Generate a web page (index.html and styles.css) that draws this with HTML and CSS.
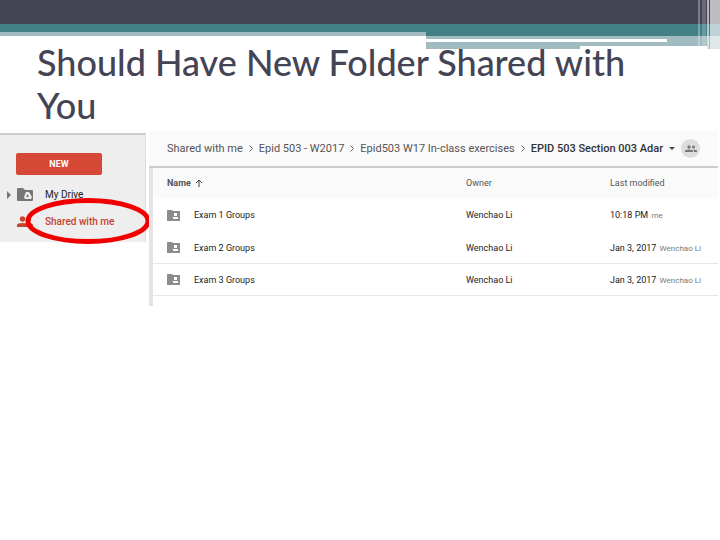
FILE: index.html
```
<!DOCTYPE html>
<html lang="en">
<head>
<meta charset="utf-8">
<title>Should Have New Folder Shared with You</title>
<link rel="stylesheet" href="styles.css">
</head>
<body>
<svg class="band" viewBox="0 0 720 49" preserveAspectRatio="none" shape-rendering="crispEdges" aria-hidden="true">
  <path fill="#444455" d="M0 0h720v24H0z"/>
  <path fill="#438086" d="M0 24h720v12H426v-4H0z"/>
  <path fill="#a0bcc0" d="M0 32h426v4H0zM426 36h281v10H580v3H426z"/>
  <path fill="#a0bcc0" d="M707 36h13v13h-13z"/>
  <path fill="#fff" d="M426 39h241v3H426z"/>
  <g fill="#fff">
    <path opacity=".3" d="M698 0h2v46h-2z"/>
    <path opacity=".2" d="M702 0h4v46h-4z"/>
    <path opacity=".6" d="M707 0h2v49h-2z"/>
    <path opacity=".65" d="M710 0h10v49h-10z"/>
  </g>
</svg>
<h1 class="title">Should Have New Folder Shared with You</h1>
<main class="shots">
  <nav class="side">
    <button class="new" type="button">NEW</button>
    <a class="link" href="#drive">
      <svg class="arrow" viewBox="0 0 4 8"><path fill="#777" d="M0 0l4 4-4 4z"/></svg>
      <svg class="icon" viewBox="0 0 16 13"><path fill="#777" d="M1 0h5l2 2h7q1 0 1 1v9q0 1-1 1H1q-1 0-1-1V1q0-1 1-1z"/><path fill="#eee" fill-rule="evenodd" d="M9 4h3l3 5-1 2H8L7 9zM10.500 6L9 9h3z"/></svg>
      <span>My Drive</span>
    </a>
    <a class="link active" href="#shared">
      <span class="arrow"></span>
      <svg class="icon" viewBox="0 0 16 13"><g fill="#c5432f"><circle cx="5.500" cy="4" r="2.700"/><circle cx="11.500" cy="4" r="2.500"/><path d="M0 12v-2q0-2 5.500-2T11 10v2zM12 12v-2q0-1-1-2 5 0 5 2v2z"/></g></svg>
      <span>Shared with me</span>
    </a>
    <svg class="ring" viewBox="0 0 126 48" aria-hidden="true"><ellipse cx="63" cy="24" rx="60" ry="20.500" fill="none" stroke="#f00000" stroke-width="5"/></svg>
  </nav>
  <section class="panel">
    <div class="crumbs">
      <a href="#shared">Shared with me</a>
      <svg class="chev" viewBox="0 0 4 7"><path d="M.5.500l3 3-3 3"/></svg>
      <a href="#w2017">Epid 503 - W2017</a>
      <svg class="chev" viewBox="0 0 4 7"><path d="M.5.500l3 3-3 3"/></svg>
      <a href="#exercises">Epid503 W17 In-class exercises</a>
      <svg class="chev" viewBox="0 0 4 7"><path d="M.5.500l3 3-3 3"/></svg>
      <button class="current" type="button">EPID 503 Section 003 Adar <svg class="caret" viewBox="0 0 6 3"><path fill="#444" d="M0 0h6L3 3z"/></svg></button>
      <button class="people" type="button" aria-label="Sharing"><svg viewBox="0 0 12 8"><g fill="#777"><circle cx="4" cy="2" r="1.700"/><circle cx="8.500" cy="2" r="1.500"/><path d="M0 7V6q0-1.500 4-1.500T8 6v1zM9 7V6l-1-1.500q4 0 4 1.500v1z"/></g></svg></button>
    </div>
    <div class="sheet">
    <table class="files">
      <thead>
        <tr><th class="name">Name <svg class="up" viewBox="0 0 8 8"><path d="M4 8V1M1 4l3-3 3 3"/></svg></th><th class="owner">Owner</th><th>Last modified</th></tr>
      </thead>
      <tbody>
        <tr><td><div class="file"><svg class="folder" viewBox="0 0 13 11"><path fill="#8c8c8c" d="M0 0h5l1 1h7v10H0z"/><path fill="#fff" d="M7 3h3v3H7zM6 7h5v2H6z"/></svg>Exam 1 Groups</div></td><td>Wenchao Li</td><td>10:18 PM <small>me</small></td></tr>
        <tr><td><div class="file"><svg class="folder" viewBox="0 0 13 11"><path fill="#8c8c8c" d="M0 0h5l1 1h7v10H0z"/><path fill="#fff" d="M7 3h3v3H7zM6 7h5v2H6z"/></svg>Exam 2 Groups</div></td><td>Wenchao Li</td><td>Jan 3, 2017 <small>Wenchao Li</small></td></tr>
        <tr><td><div class="file"><svg class="folder" viewBox="0 0 13 11"><path fill="#8c8c8c" d="M0 0h5l1 1h7v10H0z"/><path fill="#fff" d="M7 3h3v3H7zM6 7h5v2H6z"/></svg>Exam 3 Groups</div></td><td>Wenchao Li</td><td>Jan 3, 2017 <small>Wenchao Li</small></td></tr>
      </tbody>
    </table>
    </div>
  </section>
</main>
</body>
</html>
```
FILE: styles.css
```
* { box-sizing: border-box; }
body { margin: 0; background: #fff; font-family: Roboto, "Liberation Sans", sans-serif; font-size: 9px; color: #222; }
svg { display: block; flex: none; }
a { color: inherit; text-decoration: none; }
button { font: inherit; color: inherit; border: 0; padding: 0; background: none; }

.band { width: 100%; height: 49px; margin-bottom: -8px; }
.title { margin: 0; padding: 0 80px 0 37px; font: 500 36px/43px "Trebuchet MS", Lato, sans-serif; color: #444455; }

.shots { display: flex; align-items: flex-start; gap: 3px; padding: 4px 2px 0 0; }
.side { position: relative; flex: 0 0 146px; margin-top: 2px; height: 109px; padding-top: 18px; background: #eee; border-top: 2px solid #ccc; border-right: 1px solid #ddd; }
.new { display: block; width: 86px; height: 22px; margin: 0 0 6px 16px; border-radius: 2px; background: #d64937; color: #fff; font-weight: 700; }
.link { display: flex; align-items: center; height: 27px; padding-left: 7px; font-size: 10px; }
.arrow { width: 4px; height: 8px; margin-right: 6px; }
.icon { width: 16px; height: 13px; margin-right: 12px; }
.active { color: #c5432f; font-weight: 500; }
.ring { position: absolute; left: 25px; top: 62px; width: 126px; height: 48px; }

.panel { position: relative; flex: 1; min-width: 0; background: #fff; }
.crumbs { display: flex; align-items: center; gap: 6px; height: 37px; padding-left: 18px; background: #fafafa; border-bottom: 2px solid #ccc; font-size: 11px; color: #555; white-space: nowrap; }
.chev { width: 4px; height: 7px; fill: none; stroke: #666; }
.current { display: flex; align-items: center; gap: 6px; font-weight: 500; color: #333; }
.caret { width: 6px; height: 3px; }
.people { display: grid; place-items: center; width: 19px; height: 19px; border-radius: 50%; background: #ddd; }
.people svg { width: 12px; height: 8px; }

.sheet { padding-bottom: 10px; border-left: 4px solid #e4e4e4; }
.files { width: 100%; border-collapse: collapse; table-layout: fixed; }
.files th { height: 31px; padding: 0 0 2px; background: #fafafa; text-align: left; font-weight: 400; color: #555; }
.files .name { width: 313px; padding-left: 14px; font-weight: 700; }
.files .owner { width: 144px; }
.up { display: inline-block; width: 8px; height: 8px; margin-left: 2px; vertical-align: -1px; fill: none; stroke: #444; }
.files td { height: 32px; padding: 1px 0 0; border-bottom: 1px solid #e6e6e6; white-space: nowrap; }
.files tbody tr:first-child td { border-bottom-color: #fff; }
.files td:first-child { padding-left: 14px; }
.file { display: flex; align-items: center; gap: 14px; }
.folder { width: 13px; height: 11px; }
small { margin-left: 1px; font-size: 8px; color: #777; }
```
